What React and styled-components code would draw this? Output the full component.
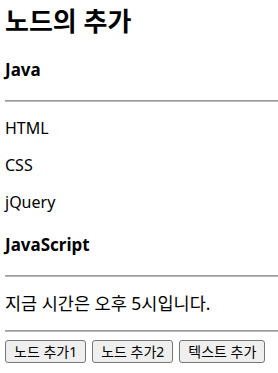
import React from 'react'
import styled, {createGlobalStyle} from 'styled-components'

const GlobalStyle = createGlobalStyle`
  html, body {
    margin: 0;
    padding: 0;
    background: #fff;
  }
  body {
    font-family: "Noto Sans", "Noto Sans CJK KR", sans-serif;
    color: #000;
  }
`

const Page = styled.div`
  padding: 5px 0 0 5px;
  overflow: hidden;
`
const Title = styled.h2`
  font-size: 26px;
  line-height: 33px;
  font-weight: 700;
  margin: 0;
`
const Heading = styled.h4`
  font-size: 17px;
  line-height: 21px;
  font-weight: 700;
  margin: 20.5px 0;
`
const Rule = styled.hr`
  margin: 8px 0;
  height: 0;
  border: 0;
  border-top: 1px solid #9a9a9a;
  border-bottom: 1px solid #b8b8b8;
`
const Item = styled.p`
  font-size: ${props => props.$size || 16}px;
  line-height: 21px;
  margin: 16px 0;
`
const Toolbar = styled.div`
  display: flex;
  gap: 6px;
  margin-top: 8px;
`
const Button = styled.button`
  font-family: "Noto Sans", "Noto Sans CJK KR", sans-serif;
  font-size: 14px;
  line-height: 17px;
  height: 23px;
  padding: 1px 8px;
  color: #000;
  background: #efefef;
  border: 1px solid #767676;
  border-radius: 3px;
`

const App = () => (
  <Page>
    <GlobalStyle />
    <Title>노드의 추가</Title>
    <Heading>Java</Heading>
    <Rule />
    <Item>HTML</Item>
    <Item>CSS</Item>
    <Item>jQuery</Item>
    <Heading>JavaScript</Heading>
    <Rule />
    <Item $size={17.5}>지금 시간은 오후 5시입니다.</Item>
    <Rule />
    <Toolbar>
      <Button>노드 추가1</Button>
      <Button>노드 추가2</Button>
      <Button>텍스트 추가</Button>
    </Toolbar>
  </Page>
)

export default App
